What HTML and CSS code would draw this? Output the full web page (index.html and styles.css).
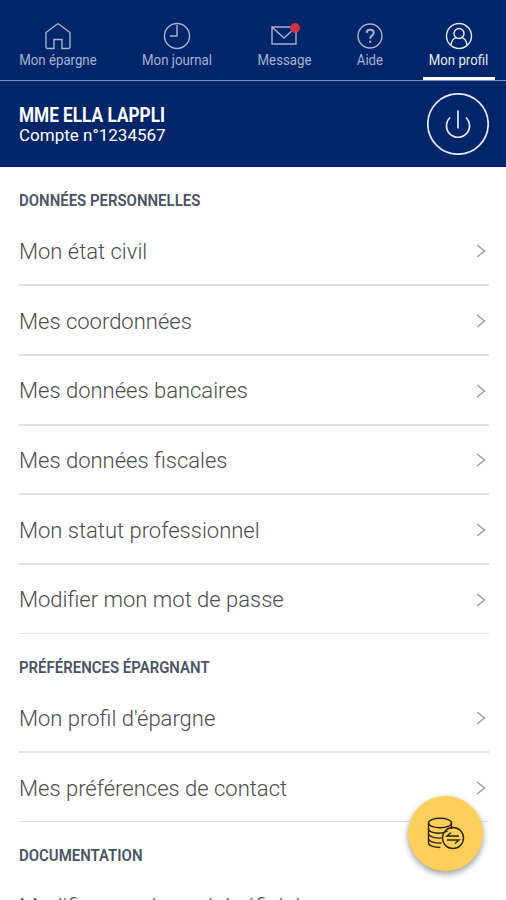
FILE: index.html
```html
<!DOCTYPE html>
<html lang="fr">
<head>
<meta charset="utf-8">
<title>Mon profil</title>
<link rel="stylesheet" href="styles.css">
</head>
<body>
<svg class="defs" aria-hidden="true"><symbol id="chevron" viewBox="0 0 10 14"><path d="M1.2 1 8.4 7 1.2 13"/></symbol></svg>
<nav class="tabs">
  <a class="tab t1"><svg viewBox="0 0 28 28"><path d="M2 10.500 14 1.500l12 9V25a1.500 1.500 0 0 1-1.500 1.500H18v-9h-8v9H3.500A1.500 1.500 0 0 1 2 25z"/></svg><span>Mon épargne</span></a>
  <a class="tab t2"><svg viewBox="0 0 28 28"><circle cx="14" cy="14" r="12.500"/><path d="M14 3v11H7"/></svg><span>Mon journal</span></a>
  <a class="tab t3"><svg viewBox="0 0 28 28"><path d="M2 5h24v17H2zM2.500 5.500 14 16 25.500 5.500"/></svg><i class="badge"></i><span>Message</span></a>
  <a class="tab t4"><svg viewBox="0 0 28 28"><circle cx="14" cy="14" r="12"/><path class="bold" d="M10.700 11c0-4.600 7-4.300 7-.3 0 3-3.500 2.700-3.500 6M14.200 18.700v2"/></svg><span>Aide</span></a>
  <a class="tab t5 active"><svg viewBox="0 0 28 28"><circle cx="14" cy="14" r="12.500"/><circle cx="14" cy="11.500" r="5"/><path d="M6 23c.5-4.500 2.500-6.500 5.300-7.300M22 23c-.5-4.500-2.500-6.500-5.300-7.300"/></svg><span>Mon profil</span></a>
</nav>
<header class="account">
  <div><h1><span>MME ELLA LAPPLI</span></h1><p><span>Compte n°1234567</span></p></div>
  <button class="power" aria-label="Déconnexion"><svg viewBox="0 0 62 62"><circle cx="31" cy="31" r="30.200"/><path d="M31 17.500v18M23 24.500a11.500 11.500 0 1 0 16 0"/></svg></button>
</header>
<main>
  <h2><span>DONNÉES PERSONNELLES</span></h2>
  <ul>
    <li><span>Mon état civil</span><svg><use href="#chevron"/></svg></li>
    <li><span>Mes coordonnées</span><svg><use href="#chevron"/></svg></li>
    <li><span>Mes données bancaires</span><svg><use href="#chevron"/></svg></li>
    <li><span>Mes données fiscales</span><svg><use href="#chevron"/></svg></li>
    <li><span>Mon statut professionnel</span><svg><use href="#chevron"/></svg></li>
    <li><span>Modifier mon mot de passe</span><svg><use href="#chevron"/></svg></li>
  </ul>
  <h2><span>PRÉFÉRENCES ÉPARGNANT</span></h2>
  <ul>
    <li><span>Mon profil d'épargne</span><svg><use href="#chevron"/></svg></li>
    <li><span>Mes préférences de contact</span><svg><use href="#chevron"/></svg></li>
  </ul>
  <h2><span>DOCUMENTATION</span></h2>
  <ul>
    <li><span>Modifier ma clause bénéficiaire</span><svg><use href="#chevron"/></svg></li>
  </ul>
</main>
<button class="fab" aria-label="Opérations"><svg viewBox="0 0 38 34"><ellipse cx="13" cy="6" rx="11.500" ry="4.700"/><path d="M1.500 6v20c0 2.500 5 4.500 12 4.500M24.500 6v6M1.500 11c0 6 14 6.500 19 3M1.500 16c0 4 7 5.500 13 5M1.500 21c0 4 7 5.500 13 5"/><circle cx="26" cy="21" r="10.500"/><path d="M32 19H20l4-3.500M20 23h12l-4 3.500"/></svg></button>
</body>
</html>
```

FILE: styles.css
```css
* { box-sizing: border-box; }
body { margin: 0; width: 506px; height: 900px; overflow: hidden; background: #fff; font-family: Roboto, "Liberation Sans", sans-serif; }
h1, h2, p, ul { margin: 0; padding: 0; }
svg { fill: none; stroke: currentColor; }
button { padding: 0; border: 0; background: none; }
.defs { position: absolute; width: 0; height: 0; }
.tabs { display: flex; height: 81px; padding: 0 11px 0 13px; justify-content: space-between; background: #002569; border-bottom: 1px solid #8193bd; }
.tab { position: relative; display: flex; flex-direction: column; align-items: center; padding-top: 22px; color: #a7b3d1; font-size: 14px; font-weight: 400; line-height: 18px; }
.tab svg { width: 28px; height: 28px; stroke-width: 1.4; margin-bottom: 1px; }
.tab .bold { stroke-width: 2; }
.t1 { width: 90px; }
.t2 { width: 82px; }
.t3 { width: 66px; }
.t4 { width: 40px; }
.t5 { width: 72px; }
.tab span { white-space: nowrap; transform: scaleX(.945); }
.active { color: #e6eaf5; border-bottom: 3px solid #fff; }
.badge { position: absolute; top: 23px; left: 39px; width: 10px; height: 10px; border-radius: 50%; background: #c93345; }
.account { display: flex; justify-content: space-between; align-items: center; height: 86px; padding: 0 17px 0 19px; background: #002569; color: #fff; border-bottom: 1px solid #20106b; }
.account div { padding-top: 3px; }
h1 { font-size: 19.5px; line-height: 20px; font-weight: 700; }
h1 span { display: inline-block; transform: scaleX(.883); transform-origin: left; }
.account p { font-size: 17px; line-height: 19px; }
.power, .power svg { display: block; width: 62px; height: 62px; color: #e4e8f5; stroke-width: 1.7; }
main { padding: 0 17px 0 19px; }
h2 { height: 49.5px; padding-top: 22px; font-size: 17px; line-height: 22px; font-weight: 600; color: #4b5366; }
h2 span { display: inline-block; transform: scaleX(.88); transform-origin: left; }
ul { list-style: none; }
li { display: flex; justify-content: space-between; align-items: center; height: 69.7px; padding-top: 2px; border-bottom: 2px solid #e0e0e0; font-size: 22px; font-weight: 300; color: #4c4c4c; }
li:last-child { height: 69px; border-bottom: 1px solid #e4e4e4; }
li svg { width: 10px; height: 14px; margin-right: 3px; stroke: #a0a0a0; stroke-width: 1.6; }
.fab { position: absolute; left: 408px; top: 796px; width: 75px; height: 75px; border-radius: 50%; background: #fecf5b; color: #2b240f; display: grid; place-items: center; box-shadow: 0 3px 6px rgba(0,0,0,.4); }
.fab svg { width: 38px; height: 34px; stroke-width: 1.4; }
```
